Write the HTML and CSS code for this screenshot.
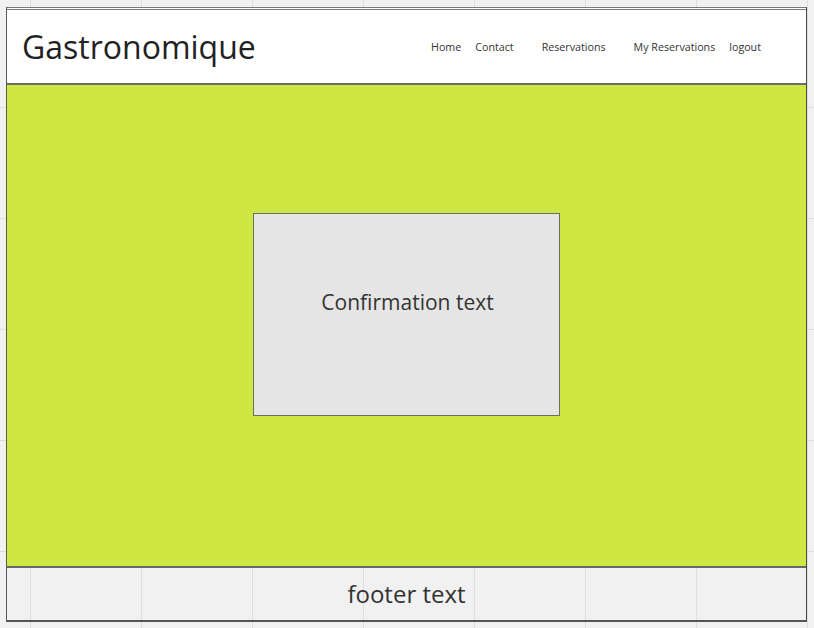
FILE: index.html
```html
<!DOCTYPE html>
<html lang="en">
<head>
<meta charset="utf-8">
<title>Gastronomique</title>
<link rel="stylesheet" href="styles.css">
</head>
<body>
<div class="frame">
  <header class="header">
    <h1 class="brand">Gastronomique</h1>
    <nav class="nav">
      <a class="nav-link" href="#">Home</a>
      <a class="nav-link" href="#">Contact</a>
      <a class="nav-link nav-link-wide" href="#">Reservations</a>
      <a class="nav-link" href="#">My Reservations</a>
      <a class="nav-link" href="#">logout</a>
    </nav>
  </header>
  <main class="main">
    <div class="confirm-box">
      <p class="confirm-text">Confirmation text</p>
    </div>
  </main>
  <footer class="footer">footer text</footer>
</div>
</body>
</html>
```

FILE: styles.css
```css
html, body {
  margin: 0;
  padding: 0;
}

body {
  width: 814px;
  height: 628px;
  overflow: hidden;
  font-family: "Open Sans", "Noto Sans", sans-serif;
  background-color: #f1f1f1;
  background-image:
    linear-gradient(to right, #dedede 1px, transparent 1px),
    linear-gradient(to bottom, #dedede 1px, transparent 1px);
  background-size: 111px 111px;
  background-position: 30px -4px;
}

.frame {
  box-sizing: border-box;
  width: 801px;
  margin: 7px 0 0 6px;
  border-left: 1px solid #5a5a5a;
  border-right: 1px solid #4c4c44;
}

.header {
  box-sizing: border-box;
  height: 78px;
  display: flex;
  align-items: center;
  background: #ffffff;
  border-top: 3px double #7a7a7a;
  border-bottom: 2px solid #6a6a6a;
  padding: 0 45px 0 15px;
}

.brand {
  margin: 0;
  font-size: 32px;
  line-height: 40px;
  font-weight: 400;
  color: #222222;
}

.nav {
  margin-left: auto;
  margin-top: 1px;
  display: flex;
  gap: 14px;
}

.nav-link {
  font-size: 10.7px;
  line-height: 15px;
  color: #333333;
  text-decoration: none;
}

.nav-link-wide {
  padding: 0 14px;
}

.main {
  box-sizing: border-box;
  height: 481px;
  background: #cfe742;
  padding-top: 128px;
}

.confirm-box {
  box-sizing: border-box;
  width: 307px;
  height: 203px;
  margin: 0 auto;
  background: #e5e5e5;
  border: 1px solid #6e6e66;
  padding-top: 74px;
}

.confirm-text {
  margin: 0 0 0 2px;
  text-align: center;
  font-size: 21px;
  line-height: 28px;
  color: #333333;
}

.footer {
  height: 52px;
  border-top: 2px solid #666666;
  border-bottom: 2px solid #555555;
  text-align: center;
  font-size: 24px;
  line-height: 52px;
  color: #333333;
}
```
